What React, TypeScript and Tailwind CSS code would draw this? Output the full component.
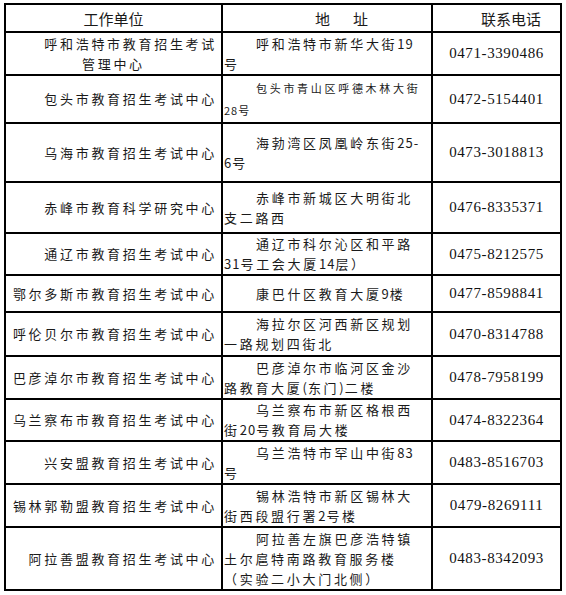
import React from "react";

type Row = {
  h: number;
  unit: string[];
  unitAlign?: "right" | "split";
  addr: string[];
  small?: boolean;
  phone: string;
};

const rows: Row[] = [
  { h: 43, unit: ["呼和浩特市教育招生考试", "管理中心"], unitAlign: "split", addr: ["呼和浩特市新华大街19", "号"], phone: "0471-3390486" },
  { h: 48, unit: ["包头市教育招生考试中心"], addr: ["包头市青山区呼德木林大街", "28号"], small: true, phone: "0472-5154401" },
  { h: 59, unit: ["乌海市教育招生考试中心"], addr: ["海勃湾区凤凰岭东街25-", "6号"], phone: "0473-3018813" },
  { h: 51, unit: ["赤峰市教育科学研究中心"], addr: ["赤峰市新城区大明街北", "支二路西"], phone: "0476-8335371" },
  { h: 42, unit: ["通辽市教育招生考试中心"], addr: ["通辽市科尔沁区和平路", "31号工会大厦14层）"], phone: "0475-8212575" },
  { h: 37, unit: ["鄂尔多斯市教育招生考试中心"], addr: ["康巴什区教育大厦9楼"], phone: "0477-8598841" },
  { h: 44, unit: ["呼伦贝尔市教育招生考试中心"], addr: ["海拉尔区河西新区规划", "一路规划四街北"], phone: "0470-8314788" },
  { h: 43, unit: ["巴彦淖尔市教育招生考试中心"], addr: ["巴彦淖尔市临河区金沙", "路教育大厦(东门)二楼"], phone: "0478-7958199" },
  { h: 42, unit: ["乌兰察布市教育招生考试中心"], addr: ["乌兰察布市新区格根西", "街20号教育局大楼"], phone: "0474-8322364" },
  { h: 43, unit: ["兴安盟教育招生考试中心"], addr: ["乌兰浩特市罕山中街83", "号"], phone: "0483-8516703" },
  { h: 43, unit: ["锡林郭勒盟教育招生考试中心"], addr: ["锡林浩特市新区锡林大", "街西段盟行署2号楼"], phone: "0479-8269111" },
  { h: 63, unit: ["阿拉善盟教育招生考试中心"], addr: ["阿拉善左旗巴彦浩特镇", "土尔扈特南路教育服务楼", "（实验二小大门北侧）"], phone: "0483-8342093" },
];

const cjk = "font-['Noto_Sans_CJK_SC','Noto_Sans',sans-serif]";

function Addr({ text }: { text: string }) {
  const parts = text.match(/[0-9()\-]+|[^0-9()\-]+/g) || [];
  return (
    <>
      {parts.map((p, i) =>
        /^[0-9()\-]+$/.test(p) ? (
          <span key={i} className="tracking-[1px]">
            {p}
          </span>
        ) : (
          <span key={i}>{p}</span>
        )
      )}
    </>
  );
}

export default function App() {
  return (
    <div className="min-h-[595px] w-[566px] bg-white pt-[3px] pl-[4px]">
      <div className={`w-[558px] border-2 border-black text-[#1a1a1a] ${cjk}`}>
        {/* header */}
        <div className="flex h-[26px]">
          <div className="flex w-[217px] items-center justify-center border-r-2 border-black text-[15px] leading-none">
            工作单位
          </div>
          <div className="flex w-[210px] items-center border-r-2 border-black pl-[92px] text-[15px] leading-none">
            <span className="mr-[23px]">地</span>
            <span>址</span>
          </div>
          <div className="flex w-[127px] items-center pl-[48px] text-[15px] leading-none">
            联系电话
          </div>
        </div>
        {rows.map((r, i) => (
          <div
            key={i}
            className="flex border-t-2 border-black"
            style={{ height: r.h }}
          >
            <div className="flex w-[217px] flex-col justify-center border-r-2 border-black pr-[4px] text-[13px] leading-[20px] tracking-[2.7px]">
              {r.unitAlign === "split" ? (
                <>
                  <div className="text-right">{r.unit[0]}</div>
                  <div className="pl-[76px]">{r.unit[1]}</div>
                </>
              ) : (
                r.unit.map((u, k) => (
                  <div key={k} className="text-right">
                    {u}
                  </div>
                ))
              )}
            </div>
            <div
              className={`flex w-[210px] flex-col justify-center border-r-2 border-black pl-[1px] whitespace-nowrap ${
                r.small
                  ? "text-[11px] leading-[22px] tracking-[2.7px]"
                  : "text-[13px] leading-[20px] tracking-[2.7px]"
              }`}
            >
              {r.addr.map((a, k) => (
                <div key={k} className={k === 0 ? "pl-[32px]" : ""}>
                  <Addr text={a} />
                </div>
              ))}
            </div>
            <div className="flex w-[127px] items-center justify-center font-['Liberation_Serif',serif] text-[15px] tracking-[0.6px] text-[#111]">
              {r.phone}
            </div>
          </div>
        ))}
      </div>
    </div>
  );
}
